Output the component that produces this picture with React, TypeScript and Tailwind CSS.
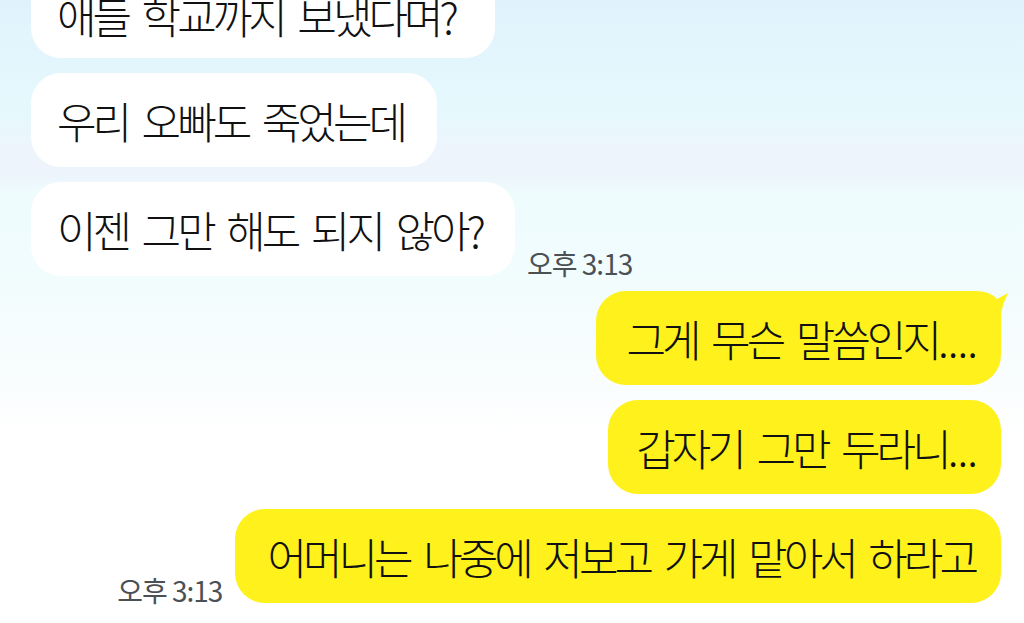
import React from "react";

// Chat rows, top to bottom
const received = ["애들 학교까지 보냈다며?", "우리 오빠도 죽었는데", "이젠 그만 해도 되지 않아?"];

const Tail = () => (
  <svg
    width="40"
    height="40"
    viewBox="0 0 40 40"
    className="absolute top-0 right-[-9px]"
  >
    <path d="M0 0 L5 0 Q20 0 27 8 L38 2 Q33 12 31 22 L31 40 L0 40 Z" fill="#fef11c" />
  </svg>
);

const Time = () => (
  <span className="mb-[-1px] whitespace-nowrap text-[28px] leading-none tracking-[-1px] text-[#4b5055]">
    오후 3:13
  </span>
);

const Dots = ({ n }: { n: number }) => (
  <span className="tracking-[-1px]">{".".repeat(n)}</span>
);

const msgText = "whitespace-nowrap text-[43px] font-light tracking-[-4px] [word-spacing:8px]";

export default function App() {
  return (
    <div
      className="flex h-[623px] w-[1024px] flex-col gap-[15px] overflow-hidden bg-[linear-gradient(to_bottom,#e1f2fc_0%,#e5f9fd_18%,#edf4fc_24%,#edf4fc_28%,#eefcfd_31%,#f1fcfd_44%,#f9fdfe_60%,#ffffff_70%)] text-[#111]"
      style={{ fontFamily: '"Noto Sans CJK KR", Roboto, sans-serif' }}
    >
      {/* received messages (white) */}
      {received.map((msg, i) => (
        <div
          key={i}
          className={`flex items-end gap-3 pl-[31px] ${i === 0 ? "-mt-[36px]" : ""}`}
        >
          <div
            className={`flex h-[94px] items-center rounded-[30px] bg-white pl-[26px] ${i === 0 ? "pt-[8px] pr-[40px]" : "pr-[33px]"} ${msgText}`}
          >
            {msg}
          </div>
          {i === received.length - 1 && <Time />}
        </div>
      ))}

      {/* sent messages (yellow) */}
      <div className="flex justify-end pr-[23px]">
        <div className={`relative flex h-[94px] items-center rounded-[30px] bg-[#fef11c] pr-[24px] pl-[31px] ${msgText}`}>
          그게 무슨 말씀인지<Dots n={4} />
          <Tail />
        </div>
      </div>
      <div className="flex justify-end pr-[23px]">
        <div className={`flex h-[94px] items-center rounded-[30px] bg-[#fef11c] pr-[24px] pl-[28px] ${msgText}`}>
          갑자기 그만 두라니<Dots n={3} />
        </div>
      </div>
      <div className="flex items-end justify-end gap-[13px] pr-[23px]">
        <Time />
        <div className={`flex h-[94px] items-center rounded-[30px] bg-[#fef11c] pr-[26px] pl-[32px] ${msgText}`}>
          어머니는 나중에 저보고 가게 맡아서 하라고
        </div>
      </div>
    </div>
  );
}
